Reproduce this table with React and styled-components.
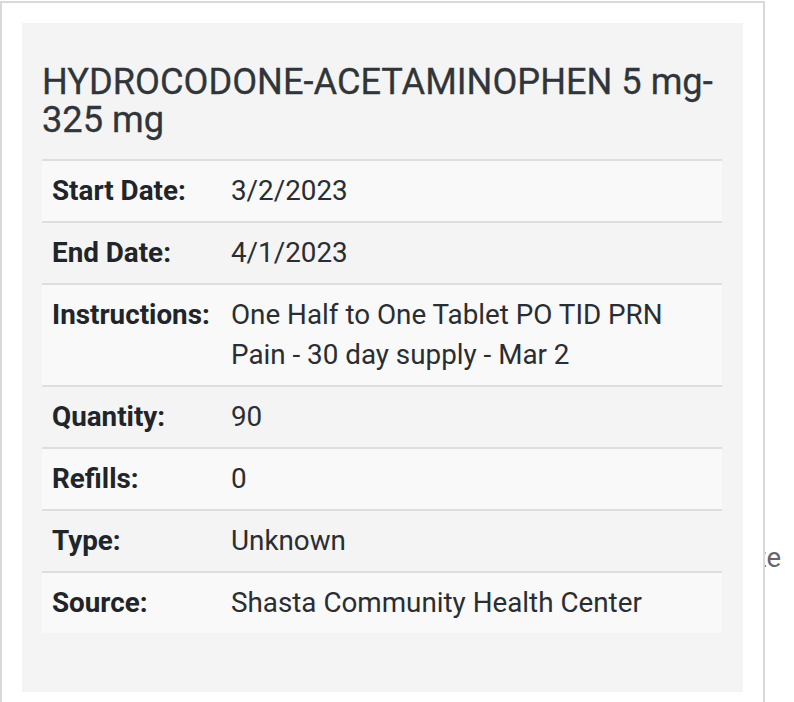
import React from "react";
import styled, { createGlobalStyle } from "styled-components";

const GlobalStyle = createGlobalStyle`
  html, body {
    margin: 0;
    padding: 0;
    background: #fff;
    font-family: Roboto, "Liberation Sans", sans-serif;
    overflow: hidden;
  }
`;

const rows = [
  { label: "Start Date:", value: "3/2/2023" },
  { label: "End Date:", value: "4/1/2023" },
  {
    label: "Instructions:",
    value: "One Half to One Tablet PO TID PRN Pain - 30 day supply - Mar 2",
  },
  { label: "Quantity:", value: "90" },
  { label: "Refills:", value: "0" },
  { label: "Type:", value: "Unknown" },
  { label: "Source:", value: "Shasta Community Health Center" },
];

const Page = () => {
  return (
    <>
      <GlobalStyle />
      <Screen>
        <Frame>
          <Card>
            <Title>HYDROCODONE-ACETAMINOPHEN 5 mg-325 mg</Title>
            <Table>
              <tbody>
                {rows.map((r, i) => (
                  <Row key={r.label} $odd={i % 2 === 0}>
                    <Label>{r.label}</Label>
                    <Value>{r.value}</Value>
                  </Row>
                ))}
              </tbody>
            </Table>
          </Card>
        </Frame>
        <Aside>ze</Aside>
      </Screen>
    </>
  );
};

const Screen = styled.div`
  display: flex;
  align-items: flex-start;
  height: 702px;
  padding-top: 1px;
  box-sizing: border-box;
`;

const Frame = styled.div`
  position: relative;
  z-index: 1;
  flex: 0 0 auto;
  width: 765px;
  height: 760px;
  box-sizing: border-box;
  border: 2px solid #d9d9d9;
  background: #fff;
  padding: 20px 20px 0 20px;
`;

const Card = styled.div`
  width: 721px;
  box-sizing: border-box;
  background: #f4f4f4;
  padding: 20px 20px 59px 20px;
`;

const Title = styled.h3`
  margin: 20px 0 20px 0;
  font-size: 36.2px;
  line-height: 38px;
  font-weight: 400;
  color: #30353a;
  width: 680px;
  -webkit-text-stroke: 0.3px #30353a;
`;

const Table = styled.table`
  width: 680px;
  border-collapse: collapse;
  font-size: 27.8px;
  line-height: 40px;
`;

const Row = styled.tr`
  border-top: 2px solid #dedede;
  background: ${({ $odd }) => ($odd ? "#f9f9f9" : "#f4f4f4")};
`;

const Label = styled.th`
  width: 159px;
  padding: 10px 10px;
  text-align: left;
  vertical-align: top;
  font-weight: 700;
  color: #212529;
  white-space: nowrap;
`;

const Value = styled.td`
  padding: 10px 10px;
  vertical-align: top;
  color: #2a2d31;
`;

const Aside = styled.div`
  margin-left: -12px;
  margin-top: 537px;
  font-size: 27.5px;
  line-height: 40px;
  color: #666;
`;

export default Page;
